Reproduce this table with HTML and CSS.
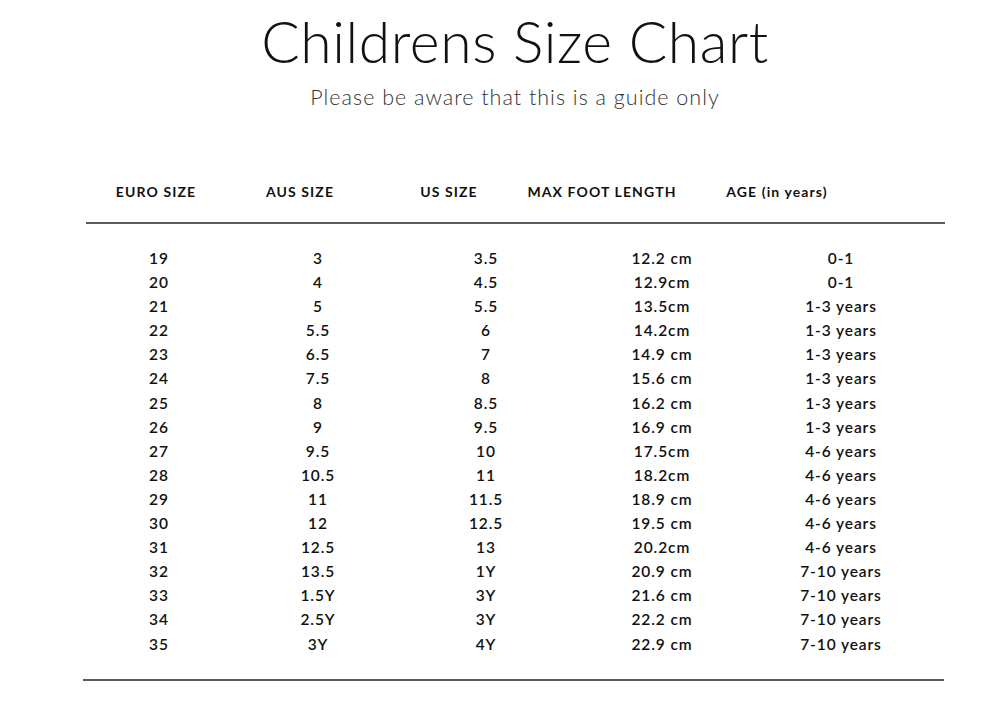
FILE: index.html
```html
<!DOCTYPE html>
<html lang="en">
<head>
<meta charset="utf-8">
<title>Childrens Size Chart</title>
<link rel="stylesheet" href="styles.css">
</head>
<body>
<main class="page">
  <header class="intro">
    <h1 class="title">Childrens Size Chart</h1>
    <p class="subtitle">Please be aware that this is a guide only</p>
  </header>
  <section class="chart">
    <div class="head-row">
      <span>EURO SIZE</span>
      <span>AUS SIZE</span>
      <span>US SIZE</span>
      <span>MAX FOOT LENGTH</span>
      <span>AGE (in years)</span>
    </div>
    <hr class="rule rule-top">
    <div class="rows">
      <div class="row"><span>19</span><span>3</span><span>3.5</span><span>12.2 cm</span><span>0-1</span></div>
      <div class="row"><span>20</span><span>4</span><span>4.5</span><span>12.9cm</span><span>0-1</span></div>
      <div class="row"><span>21</span><span>5</span><span>5.5</span><span>13.5cm</span><span>1-3 years</span></div>
      <div class="row"><span>22</span><span>5.5</span><span>6</span><span>14.2cm</span><span>1-3 years</span></div>
      <div class="row"><span>23</span><span>6.5</span><span>7</span><span>14.9 cm</span><span>1-3 years</span></div>
      <div class="row"><span>24</span><span>7.5</span><span>8</span><span>15.6 cm</span><span>1-3 years</span></div>
      <div class="row"><span>25</span><span>8</span><span>8.5</span><span>16.2 cm</span><span>1-3 years</span></div>
      <div class="row"><span>26</span><span>9</span><span>9.5</span><span>16.9 cm</span><span>1-3 years</span></div>
      <div class="row"><span>27</span><span>9.5</span><span>10</span><span>17.5cm</span><span>4-6 years</span></div>
      <div class="row"><span>28</span><span>10.5</span><span>11</span><span>18.2cm</span><span>4-6 years</span></div>
      <div class="row"><span>29</span><span>11</span><span>11.5</span><span>18.9 cm</span><span>4-6 years</span></div>
      <div class="row"><span>30</span><span>12</span><span>12.5</span><span>19.5 cm</span><span>4-6 years</span></div>
      <div class="row"><span>31</span><span>12.5</span><span>13</span><span>20.2cm</span><span>4-6 years</span></div>
      <div class="row"><span>32</span><span>13.5</span><span>1Y</span><span>20.9 cm</span><span>7-10 years</span></div>
      <div class="row"><span>33</span><span>1.5Y</span><span>3Y</span><span>21.6 cm</span><span>7-10 years</span></div>
      <div class="row"><span>34</span><span>2.5Y</span><span>3Y</span><span>22.2 cm</span><span>7-10 years</span></div>
      <div class="row"><span>35</span><span>3Y</span><span>4Y</span><span>22.9 cm</span><span>7-10 years</span></div>
    </div>
    <hr class="rule rule-bottom">
  </section>
</main>
</body>
</html>
```
FILE: styles.css
```css
* { box-sizing: border-box; }
html, body {
  margin: 0;
  padding: 0;
  background: #fff;
}
body {
  font-family: "Lato", "Inter", "Liberation Sans", sans-serif;
  color: #111;
}
.page {
  width: 985px;
  height: 722px;
  padding-top: 9px;
}
.intro {
  text-align: center;
  padding-left: 45px;
}
.title {
  margin: 0;
  font-size: 57px;
  line-height: 64px;
  font-weight: 300;
  color: #111;
  letter-spacing: 0.6px;
}
.subtitle {
  margin: 12px 0 0;
  font-size: 21.5px;
  line-height: 24px;
  font-weight: 300;
  color: #333;
  letter-spacing: 1px;
}
.chart {
  margin-left: 85px;
  width: 860px;
  margin-top: 73px;
}
.head-row {
  display: grid;
  grid-template-columns: 142px 146px 152px 154px 196px;
  font-size: 14px;
  line-height: 20px;
  font-weight: 700;
  letter-spacing: 1.1px;
  text-align: center;
  color: #111;
}
.rule {
  border: 0;
  height: 2px;
  background: #5a5a5a;
  margin: 0;
}
.rule-top {
  margin-top: 20px;
  margin-left: 1px;
}
.rule-bottom {
  margin-top: 23px;
  margin-left: -2px;
  width: 861px;
}
.rows {
  margin-top: 22px;
}
.row {
  display: grid;
  grid-template-columns: 148px 170px 166px 186px 172px;
  height: 24.1px;
  line-height: 24px;
  font-size: 15.5px;
  font-weight: 600;
  letter-spacing: 0.9px;
  text-align: center;
  color: #111;
}
```
